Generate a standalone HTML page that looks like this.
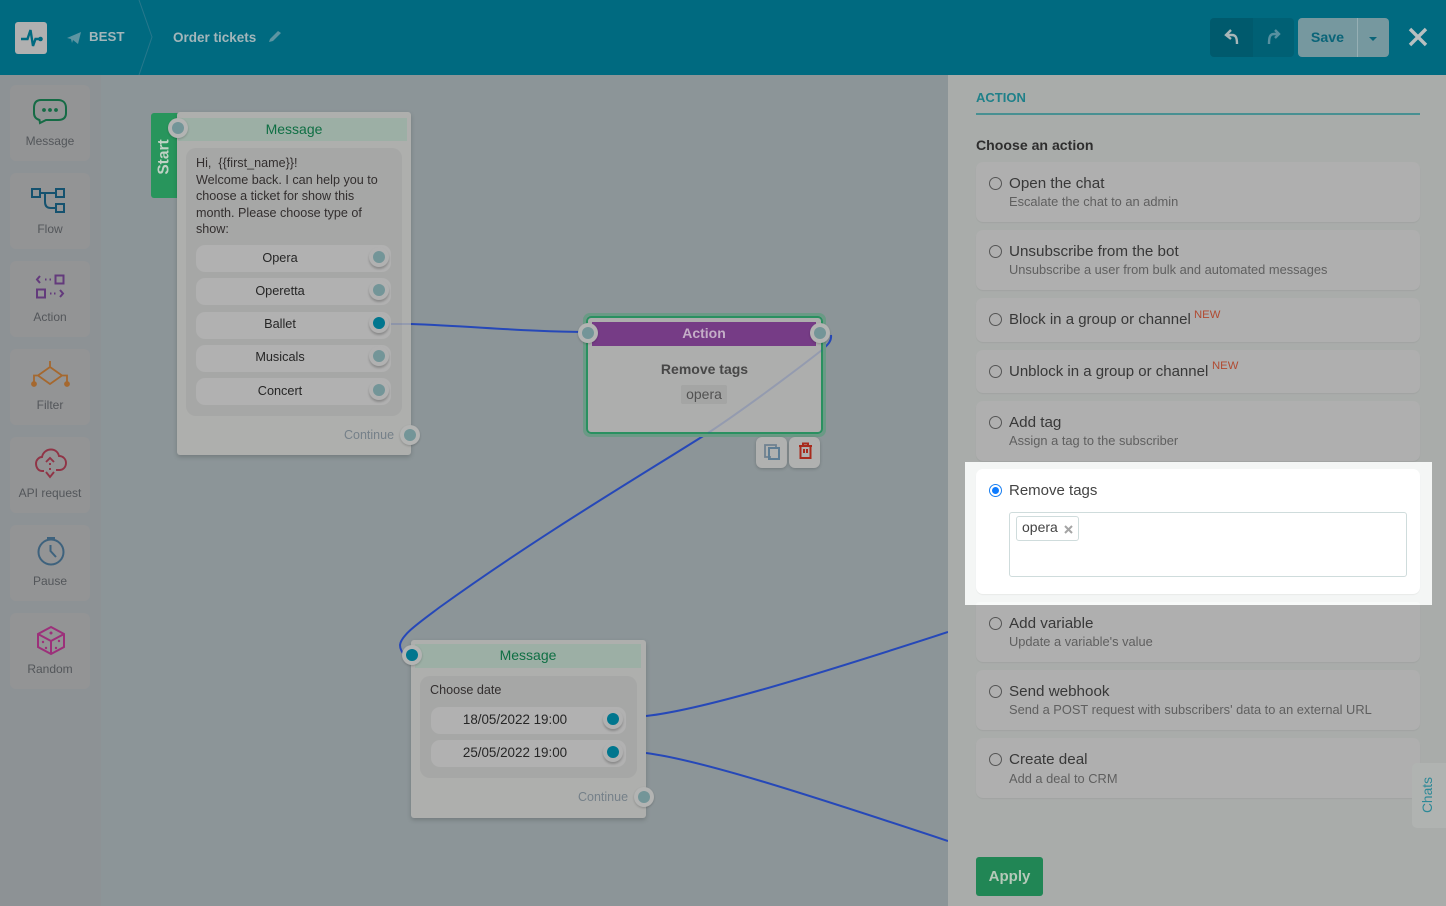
<!DOCTYPE html>
<html><head><meta charset="utf-8"><style>
*{box-sizing:border-box}
html,body{margin:0;padding:0}
body{width:1446px;height:906px;overflow:hidden;position:relative;background:#8c9598;font-family:"Liberation Sans",sans-serif;color:#3a3a3a}
.a{position:absolute}
.t{position:absolute;white-space:nowrap;line-height:16px}
.c{text-align:center}
#hdr{left:0;top:0;width:1446px;height:75px;background:#006a80}
#side{left:0;top:75px;width:101px;height:831px;background:#8d9295}
.sc{position:absolute;left:10px;width:80px;height:76px;background:#939495;border-radius:6px}
.sl{position:absolute;left:5px;width:90px;text-align:center;font-size:12px;color:#53565a;line-height:14px}
.node{position:absolute;background:#aeafad;border-radius:3px;box-shadow:0 2px 5px rgba(0,0,0,.18)}
.hd{position:absolute;background:#9cafa5;color:#0f6f44;font-size:14px;text-align:center;line-height:24px}
.in{position:absolute;background:#a6a7a6;border-radius:10px}
.bt{position:absolute;background:#b1b1b1;border-radius:9px;height:27px;width:195px;font-size:12.700px;text-align:center;line-height:26px;color:#262626}
.bt span{display:block;width:168px;position:relative}
.p{position:absolute;border-radius:50%;width:20px;height:20px;background:#b3b4b3;box-shadow:0 1px 2px rgba(0,0,0,.2)}
.p.s{background:#b1b1b1;box-shadow:0 2px 2px rgba(0,0,0,.22)}
.p i{position:absolute;left:4px;top:4px;width:12px;height:12px;border-radius:50%;background:#739598}
.p.on i{background:#00768e}
.cont{position:absolute;font-size:12.500px;color:#758089;line-height:16px;white-space:nowrap}
#panel{left:948px;top:75px;width:498px;height:831px;background:#a9acaa}
.card{position:absolute;left:976px;width:444px;background:#afafaf;border-radius:7px;box-shadow:0 1px 1px rgba(0,0,0,.05)}
.r{position:absolute;left:989px;width:13px;height:13px;border-radius:50%;border:1.300px solid #555}
.ti{position:absolute;left:1009px;font-size:15.200px;color:#383838;line-height:18px;white-space:nowrap}
.su{position:absolute;left:1009px;font-size:12.850px;color:#5f5f5f;line-height:16px;white-space:nowrap}
.nw{position:absolute;font-size:11.300px;color:#b04a31;line-height:12px}
</style></head><body>
<div class="a" id="hdr"></div>
<svg class="a" style="left:0;top:0" width="170" height="75"><path d="M139 0 L152 37 L139 75" fill="none" stroke="#27788c" stroke-width="1"/></svg>
<div class="a" style="left:15px;top:22px;width:32px;height:32px;background:#b0b0b0;border-radius:3px"></div>
<svg class="a" style="left:15px;top:22px" width="32" height="32"><path d="M6 17H12.500L15.500 8L18 24L20.500 17H26" fill="none" stroke="#006a80" stroke-width="2.400"/><circle cx="25.500" cy="17" r="2.300" fill="#006a80"/></svg>
<svg class="a" style="left:66px;top:30px" width="16" height="15"><path d="M1 8L15 2L12 14L7 10L6 13L5 9Z" fill="#5d95a2"/></svg>
<div class="t" style="left:89px;top:29px;font-size:13.300px;font-weight:bold;color:#a3b6ba">BEST</div>
<div class="t" style="left:173px;top:30px;font-size:13.500px;font-weight:bold;color:#a3b6ba">Order tickets</div>
<svg class="a" style="left:267px;top:30px" width="15" height="14"><path d="M2 12L3 9L11 1L14 3L6 11Z" fill="#5d95a2"/></svg>
<div class="a" style="left:1210px;top:18px;width:43px;height:39px;background:#005a6d;border-radius:4px 0 0 4px"></div>
<div class="a" style="left:1253px;top:18px;width:41px;height:39px;background:#006074;border-radius:0 4px 4px 0"></div>
<svg class="a" style="left:1223px;top:29px" width="60" height="18"><path d="M8 1L3 6L8 10M3 6H9C13 6 14 9 14 15" fill="none" stroke="#a9b6b8" stroke-width="2.400"/><path d="M52 1L56 5L52 9M56 5H51C47 5 46 8 46 15" fill="none" stroke="#5790a0" stroke-width="2.400"/></svg>
<div class="a" style="left:1298px;top:18px;width:91px;height:39px;background:#76989f;border-radius:4px"></div>
<div class="a" style="left:1357px;top:18px;width:1px;height:39px;background:#96afb4"></div>
<div class="t" style="left:1298px;top:30px;width:59px;text-align:center;font-size:14.200px;font-weight:bold;color:#0a6478">Save</div>
<div class="a" style="left:1369px;top:37px;width:0;height:0;border-left:4px solid transparent;border-right:4px solid transparent;border-top:4px solid #0a6478"></div>
<svg class="a" style="left:1408px;top:27px" width="20" height="20"><path d="M2 2L18 18M18 2L2 18" stroke="#b8bfc0" stroke-width="3.400"/></svg>

<div class="a" id="side"></div>
<div class="sc" style="top:85px"></div><div class="sc" style="top:173px"></div><div class="sc" style="top:261px"></div><div class="sc" style="top:349px"></div><div class="sc" style="top:437px"></div><div class="sc" style="top:525px"></div><div class="sc" style="top:613px"></div>
<div class="sl" style="top:134px">Message</div>
<div class="sl" style="top:222px">Flow</div>
<div class="sl" style="top:310px">Action</div>
<div class="sl" style="top:398px">Filter</div>
<div class="sl" style="top:486px">API request</div>
<div class="sl" style="top:574px">Pause</div>
<div class="sl" style="top:662px">Random</div>
<svg class="a" style="left:0;top:0" width="101" height="700" fill="none">
<path d="M41 100H58C63 100 66 103 66 108V113C66 118 63 120 58 120H46L40 123L39.500 120C36 119 34 117 34 113V108C34 103 36 100 41 100Z" stroke="#156b45" stroke-width="2"/>
<circle cx="44" cy="110" r="1.900" fill="#156b45"/><circle cx="50" cy="110" r="1.900" fill="#156b45"/><circle cx="56" cy="110" r="1.900" fill="#156b45"/>
<g stroke="#15526f" stroke-width="2"><rect x="32" y="189" width="8" height="8"/><rect x="56" y="189" width="8" height="8"/><rect x="56" y="204" width="8" height="8"/><path d="M40 193H56M45 193V202C45 206 47 208 51 208H56"/></g>
<g stroke="#633a7c" stroke-width="2"><rect x="55.500" y="275.500" width="8" height="8"/><rect x="37" y="289.500" width="8" height="8"/><path d="M40 276L37 279.500L40 283M45 279.500H46.500M49.500 279.500H51M50 293.500H51.500M54 293.500H55.500M60 290L63 293.500L60 297"/></g>
<g stroke="#a5682f" stroke-width="1.800"><path d="M50 361V367M50 367L62 375.500L50 384L38 375.500ZM38 375.500H34V382M62 375.500H67V382"/><circle cx="34" cy="384" r="2" fill="#a5682f"/><circle cx="67" cy="384" r="2" fill="#a5682f"/></g>
<g stroke="#903446" stroke-width="1.900"><path d="M44 471H42C38 471 36 467 36 463.500C36 460 39 457 42 457C43 452 47 449.500 51 449.500C55 449.500 58 452 59 456C63 456 66 459 66 463C66 467 63 470 60 470H56"/><path d="M46 462L50 458L54 462M46 472L50 477L54 472M50 463V465M50 468V470"/></g>
<g stroke="#3e627d" stroke-width="2"><circle cx="51" cy="552" r="12.500"/><path d="M47 538.500H55" stroke-width="3"/><path d="M50.500 545V551L56 557"/></g>
<g stroke="#9c307a" stroke-width="2"><path d="M51 627L64 634V647L51 654L38 647V634ZM38 634L51 641L64 634M51 641V654"/></g>
<g fill="#9c307a"><circle cx="51" cy="633" r="1.500"/><circle cx="43" cy="642" r="1.200"/><circle cx="46" cy="648" r="1.200"/><circle cx="56" cy="648" r="1.200"/><circle cx="59" cy="641" r="1.200"/></g>
</svg>

<svg class="a" style="left:0;top:0" width="948" height="906" fill="none" stroke="#2648b8" stroke-width="2">
<path d="M411 324C470 326 530 332 588 332"/>
<path d="M831 335C832 342 826 346 822 350C790 375 740 412 708 433C640 476 540 535 440 607C420 622 401 635 400 645C400 649 402 652 404 655"/>
<path d="M646 716C700 710 800 680 948 632"/>
<path d="M646 753C700 760 800 792 948 841"/>
</svg>

<div class="a" style="left:151px;top:113px;width:30px;height:85px;background:#28955c;border-radius:3px"></div>
<div class="t" style="left:122px;top:149px;width:85px;height:16px;text-align:center;color:#c0d2c5;font-weight:bold;font-size:15.500px;transform:rotate(-90deg)">Start</div>

<div class="node" style="left:177px;top:112px;width:234px;height:343px"></div>
<div class="hd" style="left:178px;top:118px;width:229px;height:23px;line-height:22px;text-indent:3px">Message</div>
<div class="in" style="left:186px;top:148px;width:216px;height:268px"></div>
<div class="a" style="left:196px;top:155px;font-size:12.600px;line-height:16.500px;color:#332f2f;white-space:nowrap">Hi,&nbsp; {{first_name}}!<br>Welcome back. I can help you to<br>choose a ticket for show this<br>month. Please choose type of<br>show:</div>
<div class="bt" style="left:196px;top:245px"><span>Opera</span></div>
<div class="bt" style="left:196px;top:278px"><span>Operetta</span></div>
<div class="bt" style="left:196px;top:312px"><span style="top:-1px">Ballet</span></div>
<div class="bt" style="left:196px;top:345px"><span style="top:-1px">Musicals</span></div>
<div class="bt" style="left:196px;top:378px"><span>Concert</span></div>
<div class="p s" style="left:369px;top:247px"><i></i></div>
<div class="p s" style="left:369px;top:280px"><i></i></div>
<div class="p s on" style="left:369px;top:313px"><i></i></div>
<div class="p s" style="left:369px;top:346px"><i></i></div>
<div class="p s" style="left:369px;top:380px"><i></i></div>
<div class="cont" style="left:344px;top:427px">Continue</div>
<div class="p" style="left:400px;top:425px"><i></i></div>
<div class="p" style="left:168px;top:118px"><i></i></div>

<div class="a" style="left:583px;top:313px;width:243px;height:124px;border:3px solid #6a9a85;border-radius:7px"></div>
<div class="a" style="left:586px;top:316px;width:237px;height:118px;background:#adaead;border:2.500px solid #2a9060;border-radius:5px"></div>
<div class="a" style="left:592px;top:322px;width:224px;height:24px;background:#763c86;color:#c4aec7;font-size:14px;font-weight:bold;text-align:center;line-height:23px">Action</div>
<div class="t c" style="left:586px;top:361px;width:237px;font-size:14px;font-weight:bold;color:#474747">Remove tags</div>
<div class="a" style="left:681px;top:385px;width:46px;height:19px;background:#a4a5a4;border-radius:2px;text-align:center;font-size:14px;line-height:18px;color:#525252">opera</div>
<div class="p" style="left:578px;top:323px"><i></i></div>
<div class="p" style="left:810px;top:323px"><i></i></div>
<div class="a" style="left:756px;top:437px;width:31px;height:31px;background:#b0b1b0;border-radius:6px;box-shadow:0 1px 3px rgba(0,0,0,.2)"></div>
<div class="a" style="left:789px;top:437px;width:31px;height:31px;background:#b0b1b0;border-radius:6px;box-shadow:0 1px 3px rgba(0,0,0,.2)"></div>
<svg class="a" style="left:756px;top:437px" width="66" height="31" fill="none"><path d="M15 20H9V8H20V10" stroke="#6f8190" stroke-width="1.800"/><rect x="13" y="11" width="10" height="11" stroke="#5e7d94" stroke-width="2"/>
<path d="M43 9H56M47 8.500V6.500H52V8.500M44.500 9V21H54.500V9M48 12V16M51 12V16" stroke="#a82a1c" stroke-width="2"/></svg>

<svg class="a" style="left:0;top:0;opacity:.18" width="948" height="906" fill="none" stroke="#2648b8" stroke-width="2"><path d="M822 350C790 375 740 412 708 433"/><path d="M391 324H411"/><path d="M626 716H646M626 753H646"/></svg>

<div class="node" style="left:411px;top:640px;width:235px;height:178px"></div>
<div class="hd" style="left:415px;top:644px;width:226px;height:24px;line-height:23px">Message</div>
<div class="in" style="left:420px;top:676px;width:217px;height:102px"></div>
<div class="t" style="left:430px;top:682px;font-size:12.600px;color:#332f2f">Choose date</div>
<div class="bt" style="left:431px;top:707px;font-size:13.400px"><span>18/05/2022 19:00</span></div>
<div class="bt" style="left:431px;top:740px;font-size:13.400px"><span>25/05/2022 19:00</span></div>
<div class="p s on" style="left:603px;top:709px"><i></i></div>
<div class="p s on" style="left:603px;top:742px"><i></i></div>
<div class="cont" style="left:578px;top:789px">Continue</div>
<div class="p" style="left:634px;top:787px"><i></i></div>
<div class="p on" style="left:402px;top:645px"><i></i></div>

<div class="a" id="panel"></div>
<div class="t" style="left:976px;top:90px;font-size:13px;font-weight:bold;color:#1f8089">ACTION</div>
<div class="a" style="left:976px;top:113px;width:444px;height:2px;background:#489092"></div>
<div class="t" style="left:976px;top:137px;font-size:14.100px;font-weight:bold;color:#2e2e2e">Choose an action</div>

<div class="card" style="top:162px;height:60px"></div>
<div class="card" style="top:230px;height:60px"></div>
<div class="card" style="top:298px;height:44px"></div>
<div class="card" style="top:350px;height:43px"></div>
<div class="card" style="top:401px;height:60px"></div>
<div class="a" style="left:965px;top:462px;width:467px;height:143px;background:#f4f6f5"></div>
<div class="card" style="top:469px;height:125px;background:#fff"></div>
<div class="card" style="top:605px;height:57px;border-radius:0 0 7px 7px"></div>
<div class="a" style="left:976px;top:602px;width:444px;height:3px;background:#f8faf9;border-radius:7px 7px 0 0"></div>
<div class="card" style="top:670px;height:60px"></div>
<div class="card" style="top:738px;height:60px"></div>

<div class="r" style="top:177px"></div><div class="ti" style="top:175px">Open the chat</div><div class="su" style="top:194px">Escalate the chat to an admin</div>
<div class="r" style="top:245px"></div><div class="ti" style="top:243px">Unsubscribe from the bot</div><div class="su" style="top:262px">Unsubscribe a user from bulk and automated messages</div>
<div class="r" style="top:313px"></div><div class="ti" style="top:311px;font-size:15px">Block in a group or channel</div><div class="nw" style="left:1194px;top:309px">NEW</div>
<div class="r" style="top:365px"></div><div class="ti" style="top:363px;font-size:15px">Unblock in a group or channel</div><div class="nw" style="left:1212px;top:360px">NEW</div>
<div class="r" style="top:416px"></div><div class="ti" style="top:414px">Add tag</div><div class="su" style="top:433px">Assign a tag to the subscriber</div>
<div class="r" style="top:484px;border:1.300px solid #1a7ff0;background:#fff"><div class="a" style="left:1.700px;top:1.700px;width:7px;height:7px;border-radius:50%;background:#0d7bff"></div></div><div class="ti" style="top:482px;color:#444;font-size:15px">Remove tags</div>
<div class="a" style="left:1009px;top:512px;width:398px;height:65px;border:1px solid #cfdcdc;border-radius:3px;background:#fff"></div>
<div class="a" style="left:1016px;top:516px;width:63px;height:25px;border:1px solid #cfdcdc;border-radius:3px;background:#fff"></div>
<div class="t" style="left:1022px;top:519px;font-size:14px;color:#444">opera</div>
<svg class="a" style="left:1064px;top:525px" width="9" height="9"><path d="M1 1L8 8M8 1L1 8" stroke="#a4a4a4" stroke-width="2"/></svg>
<div class="r" style="top:617px"></div><div class="ti" style="top:615px">Add variable</div><div class="su" style="top:634px">Update a variable's value</div>
<div class="r" style="top:685px"></div><div class="ti" style="top:683px">Send webhook</div><div class="su" style="top:702px">Send a POST request with subscribers' data to an external URL</div>
<div class="r" style="top:753px"></div><div class="ti" style="top:751px">Create deal</div><div class="su" style="top:771px">Add a deal to CRM</div>

<div class="a" style="left:1412px;top:763px;width:34px;height:65px;background:#b0b3b1;border-radius:5px 0 0 5px"></div>
<div class="t c" style="left:1398px;top:787px;width:60px;font-size:13.800px;color:#2d8997;transform:rotate(-90deg)">Chats</div>
<div class="a" style="left:976px;top:857px;width:67px;height:39px;background:#218655;border-radius:3px;color:#b5c9b9;font-size:15px;font-weight:bold;text-align:center;line-height:40px">Apply</div>
</body></html>
